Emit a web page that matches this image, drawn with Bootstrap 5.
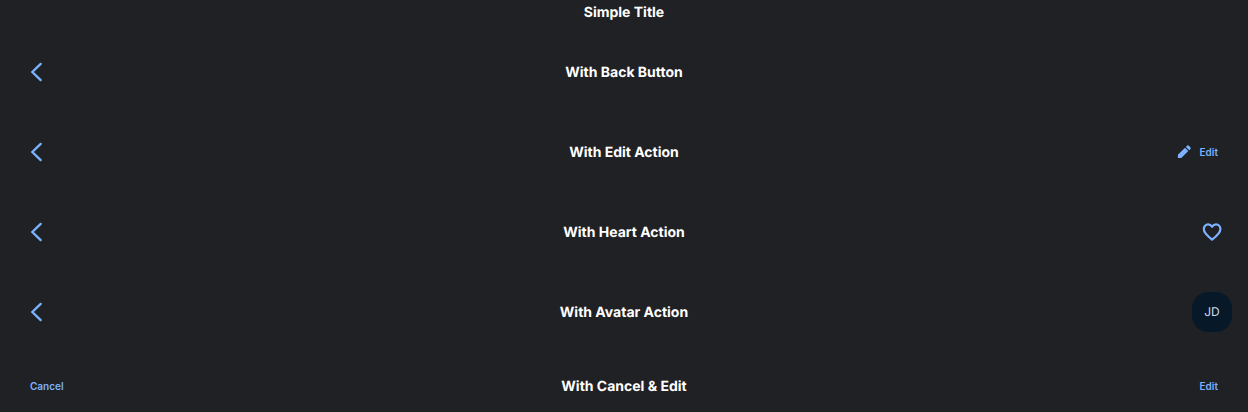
<!DOCTYPE html>
<html lang="en" data-bs-theme="dark">
<head>
<meta charset="utf-8">
<meta name="viewport" content="width=device-width, initial-scale=1">
<title>Headers</title>
<link href="https://cdn.jsdelivr.net/npm/bootstrap@5.3.0/dist/css/bootstrap.min.css" rel="stylesheet">
<style>
body{background:#202124;color:#fff;font-family:Inter,sans-serif;overflow:hidden;text-rendering:geometricPrecision}
.stack{gap:40px}
.bar{display:grid;grid-template-columns:1fr auto 1fr;align-items:center;height:40px}
.bar h1{font-size:14px;line-height:22px;padding-top:2px;font-weight:700;margin:0}
.bar-first{height:24px;margin-bottom:-12px}
.bar-last{height:28px}
.tap,.tap:hover{height:40px;color:#7cb2ff;border:0;padding:0 14px;font-size:10px;font-weight:600;line-height:16px;gap:8px}
.tap-icon{width:40px;padding:0}
.bar-last .tap{height:28px}
.initials{width:40px;height:40px;border-radius:16px;background:#071828;color:#d0dced;font-size:12px;line-height:16px}
</style>
</head>
<body>
<svg class="d-none">
<symbol id="back" viewBox="0 0 24 24"><path fill="none" stroke="currentColor" stroke-width="2.3" stroke-linecap="round" d="M16.700 3.900L8.300 12l8.400 8.100"/></symbol>
</svg>
<main class="stack d-flex flex-column px-3">
<header class="bar bar-first"><span></span><h1>Simple Title</h1><span></span></header>
<header class="bar"><button class="btn tap tap-icon d-flex align-items-center justify-content-center" aria-label="Back"><svg width="24" height="24"><use href="#back"/></svg></button><h1>With Back Button</h1><span></span></header>
<header class="bar"><button class="btn tap tap-icon d-flex align-items-center justify-content-center" aria-label="Back"><svg width="24" height="24"><use href="#back"/></svg></button><h1>With Edit Action</h1><button class="btn tap d-flex align-items-center ms-auto"><svg width="16" height="16" viewBox="0 0 16 16" fill="currentColor"><path d="M1.900 10.700L9 3.800l3.300 3.300-7 7H1.900zM9.900 2.900l1.300-1.300a1 1 0 0 1 1.400 0l1.900 1.900a1 1 0 0 1 0 1.400l-1.300 1.300z"/></svg>Edit</button></header>
<header class="bar"><button class="btn tap tap-icon d-flex align-items-center justify-content-center" aria-label="Back"><svg width="24" height="24"><use href="#back"/></svg></button><h1>With Heart Action</h1><button class="btn tap tap-icon d-flex align-items-center justify-content-center ms-auto" aria-label="Like"><svg width="24" height="24" viewBox="0 0 24 24" fill="none" stroke="currentColor" stroke-width="2.200" stroke-linejoin="round"><path d="M12.100 19.600C8.300 16.800 3.800 13.500 3.800 9.100c0-2.800 2-4.700 4.300-4.700 1.700 0 3.100.9 4 2.400.9-1.500 2.300-2.400 4-2.400 2.300 0 4.300 1.900 4.300 4.700 0 4.400-4.500 7.700-8.300 10.500z"/></svg></button></header>
<header class="bar"><button class="btn tap tap-icon d-flex align-items-center justify-content-center" aria-label="Back"><svg width="24" height="24"><use href="#back"/></svg></button><h1>With Avatar Action</h1><div class="initials d-flex align-items-center justify-content-center ms-auto">JD</div></header>
<header class="bar bar-last"><button class="btn tap me-auto">Cancel</button><h1>With Cancel &amp; Edit</h1><button class="btn tap ms-auto">Edit</button></header>
</main>
<script src="https://cdn.jsdelivr.net/npm/bootstrap@5.3.0/dist/js/bootstrap.bundle.min.js"></script>
</body>
</html>
